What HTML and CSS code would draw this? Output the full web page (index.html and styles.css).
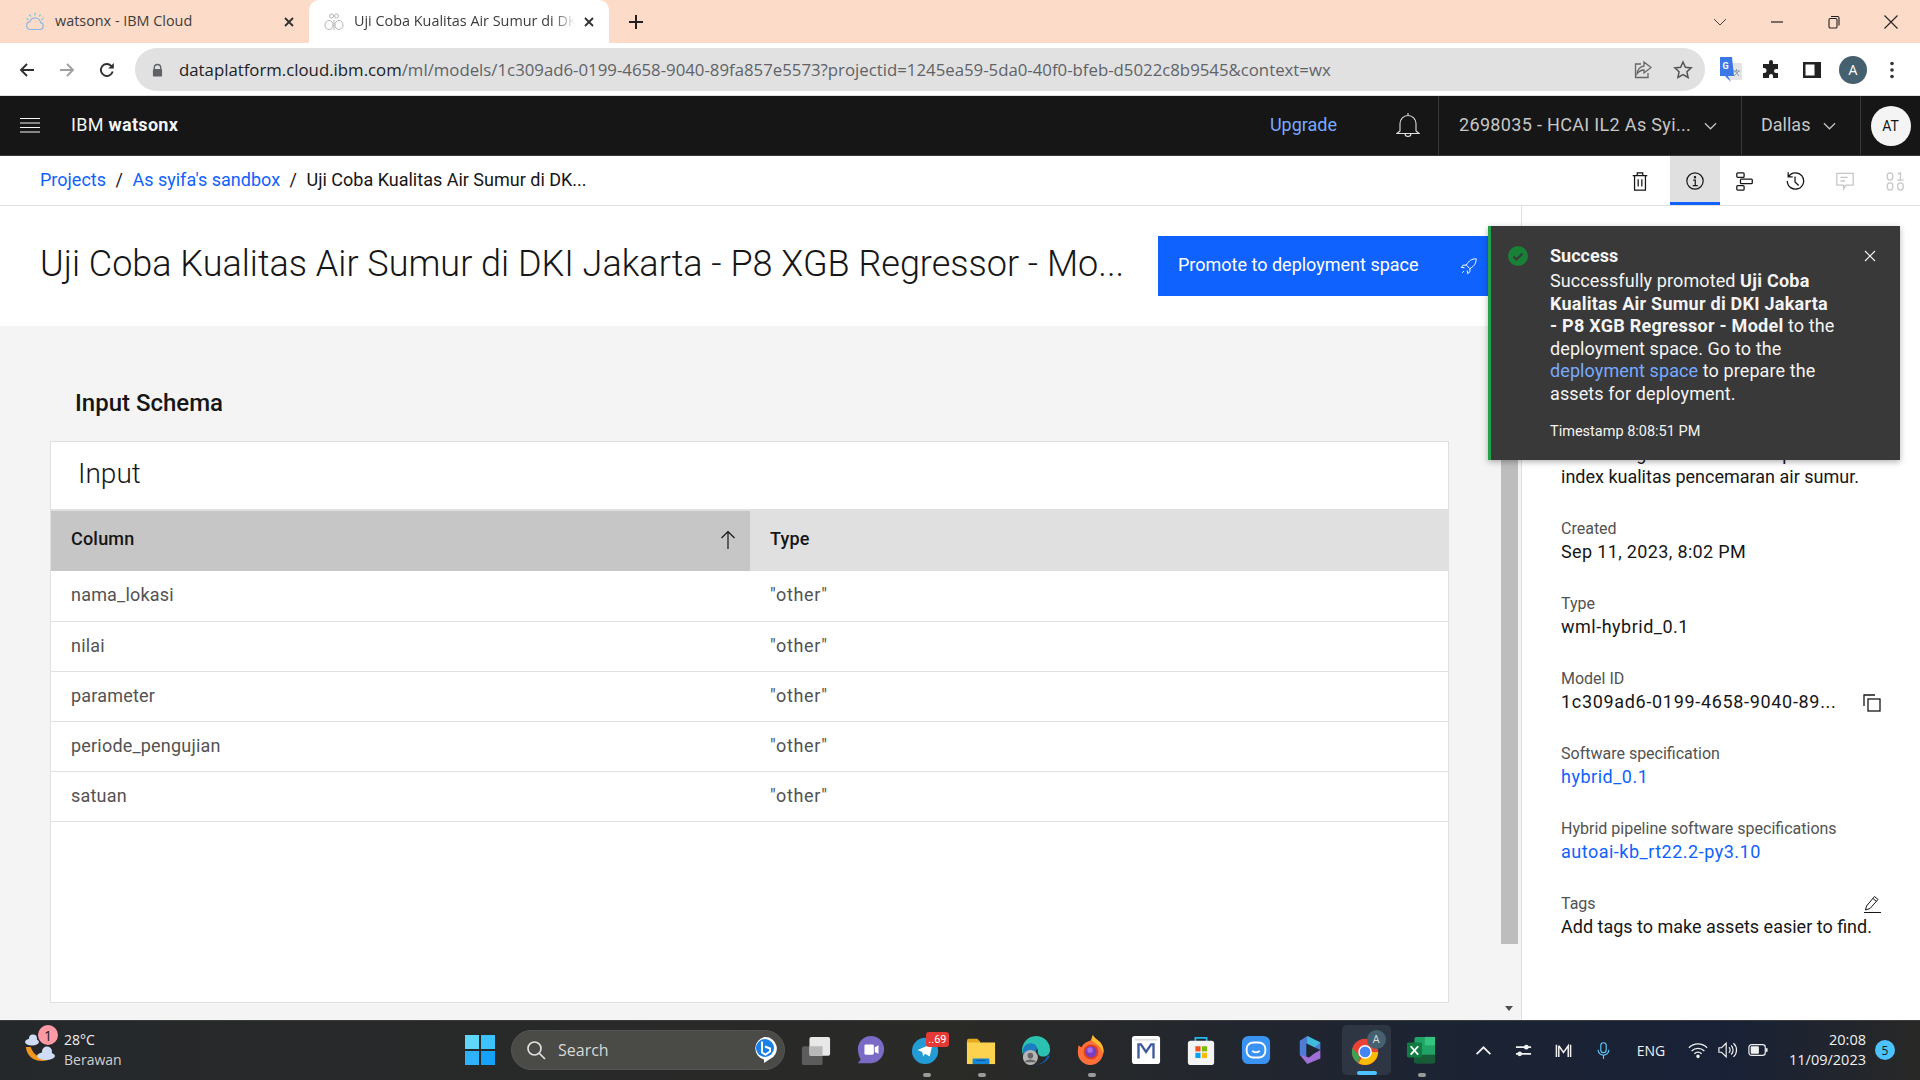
FILE: index.html
```html
<!DOCTYPE html>
<html lang="en">
<head>
<meta charset="utf-8">
<title>Uji Coba Kualitas Air Sumur di DKI Jakarta</title>
<link rel="stylesheet" href="styles.css">
</head>
<body>
<div class="screen">
  <div class="tabstrip">
    <div class="tab">
      <svg class="favicon" viewBox="0 0 20 20" fill="none"><path d="M5 17.500h10a3.500 3.500 0 0 0 .6-6.900A5.500 5.500 0 0 0 5 9.600a4 4 0 0 0 0 7.900z" stroke="#8fb6e8" stroke-width="1.200"/><path d="M10 1v2.500M4.500 2.500l1.200 2M15.500 2.500l-1.200 2M1.500 6.500l2 1M18.500 6.500l-2 1" stroke="#5cc8d8" stroke-width="1.200"/></svg>
      <span class="tab-title">watsonx - IBM Cloud</span>
      <svg class="tab-close" viewBox="0 0 12 12"><path d="M2 2l8 8M10 2l-8 8" stroke="#303030" stroke-width="1.800"/></svg>
    </div>
    <div class="tab tab-active">
      <svg class="favicon" viewBox="0 0 20 20" fill="none" stroke="#b4b4b4"><circle cx="7.500" cy="4" r="2"/><circle cx="12.500" cy="4" r="2"/><ellipse cx="5" cy="13" rx="4" ry="4.500"/><ellipse cx="15" cy="13" rx="4" ry="4.500"/><path d="M10 8v10"/></svg>
      <span class="tab-title tab-title-fade">Uji Coba Kualitas Air Sumur di DKI Jakarta</span>
      <svg class="tab-close" viewBox="0 0 12 12"><path d="M2 2l8 8M10 2l-8 8" stroke="#303030" stroke-width="1.800"/></svg>
    </div>
    <svg class="newtab" viewBox="0 0 16 16"><path d="M8 1v14M1 8h14" stroke="#202020" stroke-width="2"/></svg>
    <div class="winctl">
      <svg viewBox="0 0 16 16"><path d="M2 5l6 6 6-6" fill="none" stroke="#444" stroke-width="1"/></svg>
      <svg viewBox="0 0 16 16"><path d="M2 8h12" stroke="#222" stroke-width="1.200"/></svg>
      <svg viewBox="0 0 16 16"><path d="M5 2.500h6.500a1.500 1.500 0 0 1 1.500 1.500v7.500" fill="none" stroke="#222" stroke-width="1.100"/><rect x="3" y="4.500" width="8" height="9.500" rx="1.300" fill="none" stroke="#222" stroke-width="1.100"/></svg>
      <svg viewBox="0 0 16 16"><path d="M1.500 1.500l13 13M14.500 1.500l-13 13" stroke="#222" stroke-width="1.100"/></svg>
    </div>
  </div>

  <div class="toolbar">
    <div class="navbtns">
      <svg viewBox="0 0 18 18"><path d="M16 9H3M9 3L3 9l6 6" fill="none" stroke="#303030" stroke-width="1.900"/></svg>
      <svg viewBox="0 0 18 18"><path d="M2 9h13M9 3l6 6-6 6" fill="none" stroke="#a0a0a0" stroke-width="1.900"/></svg>
      <svg viewBox="0 0 18 18"><path d="M14.700 10.500A6 6 0 1 1 13.200 4.800L15 6.500" fill="none" stroke="#303030" stroke-width="1.900"/><path d="M15.800 2v5.600h-5.600z" fill="#303030"/></svg>
    </div>
    <div class="omnibox">
      <svg class="lock" viewBox="0 0 12 14"><path d="M2.500 6V4.500a3.500 3.500 0 0 1 7 0V6" fill="none" stroke="#5f6368" stroke-width="1.500"/><rect x="1" y="6" width="10" height="8" rx="1" fill="#5f6368"/></svg>
      <div class="url"><span class="url-host">dataplatform.cloud.ibm.com</span>/ml/models/1c309ad6-0199-4658-9040-89fa857e5573?projectid=1245ea59-5da0-40f0-bfeb-d5022c8b9545&amp;context=wx</div>
      <svg class="omni-icon" viewBox="0 0 20 20" fill="none" stroke="#666" stroke-width="1.300"><path d="M8 4H2.500v13.500H15V13"/><path d="M11 2l7 5.500-7 5.500V10c-3 0-5 1-7 4 0-4 3-7.500 7-8z"/></svg>
      <svg class="omni-icon" viewBox="0 0 20 20" fill="none" stroke="#555" stroke-width="1.500"><path d="M10 2l2.400 5.300 5.800.6-4.300 3.900 1.200 5.700L10 14.600l-5.100 2.900 1.200-5.700L1.800 7.900l5.800-.6z"/></svg>
    </div>
    <div class="extensions">
      <svg class="translate" viewBox="0 0 22 26"><rect x="9" y="6" width="13" height="17" fill="#e4e4e4"/><path d="M13 14h7M16.500 12v2M14 19l5-5M15 14l4 5" stroke="#8a9aa8" fill="none"/><path d="M0 0h12l2 19H8l3 6-6-6H0z" fill="#3b78e7"/><text class="gt" x="2.500" y="12">G</text></svg>
      <svg viewBox="0 0 20 20"><path d="M8 2a2 2 0 0 1 4 0v2h5v5h-2a2 2 0 0 0 0 4h2v5h-5v-2a2 2 0 0 0-4 0v2H2v-5h1a2.500 2.500 0 0 0 0-5H2V4h6z" fill="#222"/></svg>
      <svg viewBox="0 0 20 20"><rect x="1" y="2" width="18" height="16" fill="#222"/><rect x="3.500" y="4.500" width="9" height="11" fill="#fff"/></svg>
      <div class="profile">A</div>
      <svg viewBox="0 0 20 20"><circle cx="10" cy="3.500" r="1.800" fill="#333"/><circle cx="10" cy="10" r="1.800" fill="#333"/><circle cx="10" cy="16.500" r="1.800" fill="#333"/></svg>
    </div>
  </div>

  <header class="topnav">
    <svg class="hamburger" viewBox="0 0 20 16"><path d="M0 1.500h20M0 6h20M0 10.500h20M0 15h20" stroke="#f4f4f4" stroke-width="1.200"/></svg>
    <div class="brand">IBM <b>watsonx</b></div>
    <a class="upgrade">Upgrade</a>
    <svg class="bell" viewBox="0 0 24 26" fill="none" stroke="#e0e0e0" stroke-width="1.100"><path d="M12 1v3M4 19v-7.500a8 8 0 0 1 16 0V19l3 2.500H1zM9 21.500a3 3 0 0 0 6 0"/></svg>
    <div class="nav-cell nav-account"><span>2698035 - HCAI IL2 As Syi...</span><svg viewBox="0 0 14 8"><path d="M1 1l6 6 6-6" fill="none" stroke="#c6c6c6" stroke-width="1.300"/></svg></div>
    <div class="nav-cell nav-region"><span>Dallas</span><svg viewBox="0 0 14 8"><path d="M1 1l6 6 6-6" fill="none" stroke="#c6c6c6" stroke-width="1.300"/></svg></div>
    <div class="nav-cell nav-user"><div class="avatar">AT</div></div>
  </header>

  <div class="crumbbar">
    <nav class="crumbs">
      <a>Projects</a><span class="sep">/</span><a>As syifa's sandbox</a><span class="sep">/</span><span>Uji Coba Kualitas Air Sumur di DK...</span>
    </nav>
    <div class="actions">
      <div class="action action-trash"><svg viewBox="0 0 20 22" fill="none" stroke="#161616" stroke-width="1.400"><path d="M2 5h16M7 5V2h6v3M4 5v16h12V5M8 9v8M12 9v8"/></svg></div>
      <div class="action action-on"><svg viewBox="0 0 22 22" fill="none" stroke="#161616" stroke-width="1.300"><circle cx="11" cy="11" r="9"/><path d="M9 10h2.300v6M8.500 16h5.500"/><circle cx="11" cy="6.800" r=".7" fill="#161616"/></svg></div>
      <div class="action"><svg viewBox="0 0 22 22" fill="none" stroke="#161616" stroke-width="1.400"><rect x="2" y="2" width="8" height="5" rx="1"/><rect x="6" y="9" width="13" height="5" rx="1"/><rect x="2" y="16" width="8" height="5" rx="1"/></svg></div>
      <div class="action"><svg viewBox="0 0 22 22" fill="none" stroke="#161616" stroke-width="1.400"><path d="M4 6a9 9 0 1 1-1.500 5M3.500 1.500V6.500h5M11 6v6l4 4"/></svg></div>
      <div class="action"><svg viewBox="0 0 22 22" fill="none" stroke="#c6c6c6" stroke-width="1.400"><path d="M2 2.500h18v13h-8l-2.500 4v-4H2zM6 7h8M6 11h5"/></svg></div>
      <div class="action"><svg viewBox="0 0 22 22" fill="none" stroke="#c6c6c6" stroke-width="1.400"><rect x="2.500" y="2" width="6" height="8" rx="3"/><path d="M14 3.500l3-1.500v8M13.500 10h7"/><rect x="2.500" y="13" width="6" height="8" rx="3"/><rect x="14" y="13" width="6" height="8" rx="3"/></svg></div>
    </div>
  </div>

  <div class="main">
    <section class="workspace">
      <div class="pagehead">
        <h1 class="page-title">Uji Coba Kualitas Air Sumur di DKI Jakarta - P8 XGB Regressor - Mo...</h1>
        <button class="promote"><span>Promote to deployment space</span><svg viewBox="0 0 20 20" fill="none" stroke="#fff" stroke-width="1.100"><path d="M18 2c-5 0-8 2-11 7l4 4c5-3 7-6 7-11zM7 9H3.500L1.500 11.500 5 12M11 13v3.500L8.500 18.500 8 15M4.500 15.500L2.500 17.500"/></svg></button>
      </div>
      <div class="content">
        <div class="schema">
          <h2 class="schema-title">Input Schema</h2>
          <div class="card">
            <div class="card-title">Input</div>
            <table class="grid">
              <thead>
                <tr><th class="th-sorted"><div class="th-inner">Column<svg viewBox="0 0 16 20"><path d="M8 19V1.500M1.500 8L8 1.500 14.500 8" fill="none" stroke="#161616" stroke-width="1.200"/></svg></div></th><th>Type</th></tr>
              </thead>
              <tbody>
                <tr><td>nama_lokasi</td><td>"other"</td></tr>
                <tr><td>nilai</td><td>"other"</td></tr>
                <tr><td>parameter</td><td>"other"</td></tr>
                <tr><td>periode_pengujian</td><td>"other"</td></tr>
                <tr><td>satuan</td><td>"other"</td></tr>
              </tbody>
            </table>
          </div>
        </div>
        <div class="scrollbar"><div class="thumb"></div><div class="scroll-down"></div></div>
      </div>
    </section>
    <aside class="panel">
      <div class="field"><div class="value value-clip">Model Regresor untuk memprediksi index kualitas pencemaran air sumur.</div></div>
      <div class="field"><div class="label">Created</div><div class="value value-date">Sep 11, 2023, 8:02 PM</div></div>
      <div class="field"><div class="label">Type</div><div class="value value-num">wml-hybrid_0.1</div></div>
      <div class="field"><div class="label">Model ID</div><div class="value value-row"><span class="value-id">1c309ad6-0199-4658-9040-89...</span><svg viewBox="0 0 18 18" fill="none" stroke="#161616" stroke-width="1.300"><rect x="5" y="5" width="12" height="12"/><path d="M1 12V1h11"/></svg></div></div>
      <div class="field"><div class="label">Software specification</div><div class="value value-num"><a>hybrid_0.1</a></div></div>
      <div class="field"><div class="label">Hybrid pipeline software specifications</div><div class="value value-num"><a>autoai-kb_rt22.2-py3.10</a></div></div>
      <div class="field"><div class="label label-row"><span>Tags</span><svg viewBox="0 0 18 18" fill="none" stroke="#161616" stroke-width="1"><path d="M1 17.500h17M2.500 15l1-4L11.500 1.500l3.500 3L7 13.500zM10 3.500l3.500 3"/></svg></div><div class="value">Add tags to make assets easier to find.</div></div>
    </aside>
  </div>

  <footer class="taskbar">
    <div class="weather">
      <svg class="weather-icon" viewBox="0 0 36 36"><path d="M3 16c1 9 10 14 21 11-8 1-15-3-18-11z" fill="#f0961e" stroke="#f0961e" stroke-width="2"/><g fill="#cfdcf5"><ellipse cx="8" cy="10" rx="7" ry="3.500"/><circle cx="9" cy="6.500" r="4"/><ellipse cx="22" cy="24" rx="9" ry="4"/><circle cx="23" cy="19.500" r="5"/></g></svg>
      <div class="weather-badge">1</div>
      <div class="weather-text"><div>28°C</div><div class="weather-sub">Berawan</div></div>
    </div>
    <div class="tb-slot">
      <svg class="start" viewBox="0 0 30 30"><rect width="14" height="14" fill="#5fd7fb"/><rect x="16" width="14" height="14" fill="#3cc3fb"/><rect y="16" width="14" height="14" fill="#2eb2fa"/><rect x="16" y="16" width="14" height="14" fill="#17a2fa"/></svg>
    </div>
    <div class="search">
      <svg viewBox="0 0 20 20" fill="none" stroke="#e0e0e0" stroke-width="1.700"><circle cx="8.500" cy="8.500" r="6.500"/><path d="M13 13l6 6"/></svg>
      <span>Search</span>
      <div class="bing"><svg viewBox="0 0 24 28"><path d="M12 1a11.500 11.500 0 0 1 5 22l-6 4v-3.500A11.500 11.500 0 0 1 12 1z" fill="#fff"/><circle cx="12" cy="12" r="9" fill="#1b7fe8"/><path d="M9 5.500v11l3.500 2 4.500-3v-3l-5-2" fill="none" stroke="#fff" stroke-width="2"/></svg></div>
    </div>
    <div class="tb-apps">
      <div class="tb-slot"><svg viewBox="0 0 32 32"><rect x="1" y="12" width="22" height="20" rx="2" fill="#5c5c5c"/><rect x="9" y="2" width="22" height="20" rx="2" fill="#e8e8e8"/><rect x="9" y="12" width="14" height="10" fill="#b8b8b8"/></svg></div>
      <div class="tb-slot"><svg viewBox="0 0 32 32"><path d="M16 1c8 0 14 6 14 14s-6 15-14 15H2l3-4C3 23 2 19 2 15 2 7 8 1 16 1z" fill="#7b6ac6"/><rect x="9" y="10" width="10" height="11" rx="1.500" fill="#fff"/><path d="M20 13l4-2v9l-4-2z" fill="#fff"/></svg></div>
      <div class="tb-slot tb-open"><svg viewBox="0 0 32 32"><circle cx="15" cy="17" r="14" fill="#239bd4"/><path d="M7 16l16-7-3 14-5-3-2 3-1-5z" fill="#fff"/></svg><div class="tg-badge">..69</div></div>
      <div class="tb-slot tb-open"><svg viewBox="0 0 32 32"><path d="M1 6a2 2 0 0 1 2-2h9l3 3v3H1z" fill="#e5a91c"/><rect x="1" y="8" width="30" height="23" fill="#fcd24f"/><rect x="7" y="25" width="18" height="6" rx="1" fill="#1488d8"/><path d="M11 27h10" stroke="#0a4f90"/></svg></div>
      <div class="tb-slot"><svg viewBox="0 0 32 32"><path d="M16 1a15 15 0 0 1 15 15c0 4-3 7-7 7-6 0-6-4-6-6 0-5-5-6-8-5-4 1-7 5-8 9A15 15 0 0 1 16 1z" fill="#2bc1b0"/><path d="M2 18c0-7 6-10 10-9 3 .5 5 2 5 5l-5 17A15 15 0 0 1 2 18z" fill="#1b7dc4"/><path d="M31 22a15 15 0 0 1-17 9c6 1 12-3 14-9z" fill="#0f5da8"/><circle cx="10" cy="24" r="8" fill="#b5b5b5"/><circle cx="10" cy="22" r="3" fill="#666"/><path d="M4 29c1-4 11-4 12 0" fill="#666"/></svg></div>
      <div class="tb-slot tb-open"><svg viewBox="0 0 32 32"><path d="M3 11c1 1 2 2 3 2 1-3 5-6 9-7 2-2 2-4 3-6 1 3 5 5 8 8 3 4 4 8 3 12-1 7-7 12-14 12C8 32 2 26 2 19c0-3 0-6 1-8z" fill="#ff7139"/><path d="M18 0c1 3 5 5 8 8 3 4 4 8 3 12-1-5-5-10-10-12-3-2-2-5-1-8z" fill="#ffbd2e"/><circle cx="16" cy="18" r="8" fill="#e0401f"/><circle cx="16" cy="18" r="6" fill="#7a3fc0"/><circle cx="15" cy="16" r="3" fill="#a56fe8"/></svg></div>
      <div class="tb-slot"><svg viewBox="0 0 32 32"><rect x="1" y="1" width="30" height="30" rx="3" fill="#fff"/><path d="M8 25V10h2.500l5.500 8 5.500-8H24v15M8 10v15M24 10v15" fill="none" stroke="#3d5a9e" stroke-width="2.500"/><path d="M4 5h24" stroke="#ddd" stroke-width="2"/></svg></div>
      <div class="tb-slot"><svg viewBox="0 0 32 32"><path d="M10 8V3h12v5" fill="none" stroke="#28b8e8" stroke-width="1.800"/><rect x="2" y="6" width="28" height="26" rx="3" fill="#f4f4f4"/><rect x="10" y="12" width="5.500" height="5.500" fill="#f25022"/><rect x="17" y="12" width="5.500" height="5.500" fill="#7fba00"/><rect x="10" y="19" width="5.500" height="5.500" fill="#00a4ef"/><rect x="17" y="19" width="5.500" height="5.500" fill="#ffb900"/></svg></div>
      <div class="tb-slot"><svg viewBox="0 0 32 32"><rect x="1" y="1" width="30" height="30" rx="7" fill="#3a93f2"/><rect x="6" y="8" width="20" height="16" rx="7" fill="none" stroke="#fff" stroke-width="2"/><path d="M12 17c2 2 6 2 8 0" fill="none" stroke="#fff" stroke-width="1.800"/></svg></div>
      <div class="tb-slot"><svg viewBox="0 0 32 32"><path d="M12 1l14 7v8L11 9v16l-7-4V6z" fill="#4d7cd4"/><path d="M12 1l14 7-6 5-8-4z" fill="#3dbbd8"/><path d="M26 16v9l-14 6-8-10 10 3 5-4z" fill="#a06fd8"/></svg></div>
      <div class="tb-slot tb-active"><svg viewBox="0 0 32 32"><circle cx="15" cy="18" r="14" fill="#ea4335"/><path d="M15 18h14a14 14 0 0 1-21 12z" fill="#fbbc05"/><path d="M8 30a14 14 0 0 1-6.500-16L8.500 22z" fill="#34a853"/><circle cx="15" cy="18" r="6.500" fill="#4285f4" stroke="#fff" stroke-width="1.500"/></svg><div class="chrome-badge">A</div></div>
      <div class="tb-slot tb-open"><svg viewBox="0 0 32 32"><rect x="9" y="2" width="22" height="28" rx="2" fill="#21a366"/><rect x="20" y="2" width="11" height="9" fill="#33c481"/><rect x="9" y="21" width="22" height="9" fill="#185c37"/><rect x="1" y="8" width="16" height="16" rx="1.500" fill="#107c41"/><path d="M5 12l8 9M13 12l-8 9" stroke="#fff" stroke-width="2"/></svg></div>
    </div>
    <div class="tray">
      <div class="tray-item tray-w40"><svg viewBox="0 0 16 10"><path d="M1.500 8.500L8 2l6.500 6.500" fill="none" stroke="#f0f0f0" stroke-width="1.700"/></svg></div>
      <div class="tray-item tray-w40"><svg viewBox="0 0 18 16"><path d="M1 4.500h16M1 11.500h16" stroke="#f0f0f0" stroke-width="1.800"/><circle cx="12" cy="4.500" r="2.500" fill="#f0f0f0"/><circle cx="5" cy="11.500" r="2.500" fill="#f0f0f0"/></svg></div>
      <div class="tray-item tray-w40"><svg viewBox="0 0 18 16"><path d="M1.500 2v13M16.500 2v13M4 3l5 7 5-7v12M4 3v12" fill="none" stroke="#f0f0f0" stroke-width="1.600"/></svg></div>
      <div class="tray-item tray-w40"><svg viewBox="0 0 18 22" fill="none" stroke="#60cdff" stroke-width="1.400"><rect x="5.500" y="1" width="7" height="13" rx="3.500"/><path d="M2 10a7 7 0 0 0 14 0M9 17v5"/></svg></div>
      <div class="tray-item tray-eng">ENG</div>
      <div class="tray-item tray-w30 tray-first"><svg viewBox="0 0 22 18" fill="none" stroke="#f0f0f0" stroke-width="1.500"><path d="M1 6.500a14 14 0 0 1 20 0M4 10a10 10 0 0 1 14 0M7 13a6 6 0 0 1 8 0"/><circle cx="11" cy="16" r="1.200" fill="#f0f0f0"/></svg></div>
      <div class="tray-item tray-w30"><svg viewBox="0 0 22 18" fill="none" stroke="#f0f0f0" stroke-width="1.300"><path d="M1 6.500v5h3l5 5V1.500l-5 5zM12 6a4 4 0 0 1 0 6M14.500 4a7 7 0 0 1 0 10M17 1.500a10 10 0 0 1 0 15"/></svg></div>
      <div class="tray-item tray-w30"><svg viewBox="0 0 22 14" fill="none" stroke="#f0f0f0" stroke-width="1.300"><rect x="1" y="1" width="18" height="12" rx="3"/><rect x="3" y="3" width="9" height="8" rx="1" fill="#f0f0f0" stroke="none"/><path d="M20.500 5v4" stroke-width="2"/></svg></div>
      <div class="clock"><div>20:08</div><div>11/09/2023</div></div>
      <div class="notif">5</div>
    </div>
  </footer>

  <div class="toast">
    <svg class="toast-icon" viewBox="0 0 20 20"><circle cx="10" cy="10" r="10" fill="#198038"/><path d="M5.500 10.500l3 3 6-6" fill="none" stroke="#393939" stroke-width="2"/></svg>
    <div class="toast-body">
      <div class="toast-title">Success</div>
      <div class="toast-text">Successfully promoted <b>Uji Coba</b><br><b>Kualitas Air Sumur di DKI Jakarta</b><br><b>- P8 XGB Regressor - Model</b> to the<br>deployment space. Go to the<br><a>deployment space</a> to prepare the<br>assets for deployment.</div>
      <div class="toast-time">Timestamp 8:08:51 PM</div>
    </div>
    <svg class="toast-close" viewBox="0 0 12 12"><path d="M1 1l10 10M11 1L1 11" stroke="#f4f4f4" stroke-width="1.100"/></svg>
  </div>
</div>
</body>
</html>
```
FILE: styles.css
```css
* { box-sizing: border-box; }
html, body { margin: 0; padding: 0; }
body { font-family: Roboto, "Noto Sans", sans-serif; color: #161616; background: #fff; }
svg { display: block; flex: none; }
a { color: #0f62fe; text-decoration: none; }
.screen { position: relative; width: 1920px; height: 1080px; overflow: hidden; display: flex; flex-direction: column; }

/* browser chrome */
.tabstrip { height: 43px; background: #fcdcc8; display: flex; align-items: center; flex: none; font-family: "Open Sans", sans-serif; font-size: 14.400px; color: #3c3c3c; }
.tab { width: 309px; height: 43px; display: flex; align-items: center; padding: 0 14px 0 25px; }
.tab-active { width: 300px; background: #fff; border-radius: 10px 10px 0 0; padding: 0 14px 0 15px; }
.favicon { width: 20px; height: 20px; }
.tab-title { margin-left: 10px; flex: 1; white-space: nowrap; overflow: hidden; padding-bottom: 2px; }
.tab-title-fade { -webkit-mask-image: linear-gradient(to right, #000 90%, transparent); mask-image: linear-gradient(to right, #000 90%, transparent); }
.tab-close { width: 12px; height: 12px; margin-left: 8px; }
.newtab { width: 16px; height: 16px; margin-left: 19px; }
.winctl { margin-left: auto; display: flex; align-items: center; padding-right: 21px; gap: 41px; }
.winctl svg { width: 16px; height: 16px; }

.toolbar { height: 53px; flex: none; background: #fff; display: flex; align-items: center; border-bottom: 1px solid #e0e0e0; padding-top: 1px; }
.navbtns { display: flex; width: 135px; flex: none; padding-left: 18px; gap: 22px; }
.navbtns svg { width: 18px; height: 18px; }
.omnibox { width: 1570px; flex: none; height: 43px; background: #e1e1e1; border-radius: 22px; display: flex; align-items: center; padding-left: 17px; }
.lock { width: 11px; height: 14px; }
.url { margin-left: 16px; width: 1454px; flex: none; font-family: "Open Sans", sans-serif; font-size: 16.800px; color: #5f6368; white-space: nowrap; overflow: hidden; }
.url-host { color: #202124; }
.omni-icon { width: 20px; height: 20px; margin-right: 20px; }
.extensions { display: flex; align-items: center; margin-left: 15px; flex: none; }
.extensions svg { width: 20px; height: 20px; margin-right: 21px; }
.extensions svg:last-child { margin-right: 0; }
.extensions .translate { width: 22px; height: 26px; margin-right: 19px; }
.gt { font: bold 9px Roboto, sans-serif; fill: #fff; }
.profile { width: 28px; height: 28px; border-radius: 50%; background: #45606f; color: #fff; font: 14px "Open Sans", sans-serif; display: flex; align-items: center; justify-content: center; margin-right: 15px; margin-left: -4px; }

/* top nav */
.topnav { height: 60px; flex: none; background: #161616; border-bottom: 1px solid #393939; display: flex; align-items: center; color: #f4f4f4; font-size: 18px; }
.hamburger { width: 20px; height: 16px; margin-left: 20px; margin-bottom: 2px; }
.brand { margin-left: 31px; padding-bottom: 2px; letter-spacing: .300px; }
.brand b { font-weight: 700; }
.upgrade { margin-left: auto; color: #78a9ff; padding-bottom: 2px; }
.bell { width: 24px; height: 26px; margin-left: 59px; margin-right: 18px; margin-bottom: 2px; }
.nav-cell { height: 59px; display: flex; align-items: center; border-left: 1px solid #393939; color: #c6c6c6; }
.nav-cell span { padding-bottom: 2px; }
.nav-cell svg { width: 13px; height: 8px; }
.nav-account { width: 303px; padding-left: 20px; justify-content: space-between; padding-right: 24px; letter-spacing: .330px; }
.nav-region { width: 119px; padding-left: 19px; justify-content: space-between; padding-right: 24px; }
.nav-user { width: 60px; justify-content: center; }
.avatar { width: 40px; height: 40px; border-radius: 50%; background: #f4f4f4; color: #161616; font-size: 14px; display: flex; align-items: center; justify-content: center; }

/* breadcrumb */
.crumbbar { height: 50px; flex: none; border-bottom: 1px solid #e0e0e0; display: flex; justify-content: space-between; align-items: stretch; padding-left: 40px; background: #fff; }
.crumbs { display: flex; align-items: center; font-size: 18px; padding-bottom: 2px; }
.sep { margin: 0 9.500px; }
.actions { display: flex; }
.action { width: 50px; display: flex; align-items: center; justify-content: center; }
.action svg { width: 20px; height: 20px; }
.action-trash { margin-right: 5px; }
.action-on { background: #e0e0e0; border-bottom: 3px solid #0f62fe; padding-top: 3px; }

/* main */
.main { flex: 1; display: flex; min-height: 0; }
.workspace { width: 1521px; flex: none; display: flex; flex-direction: column; }
.pagehead { height: 120px; flex: none; display: flex; align-items: center; padding-left: 40px; background: #fff; }
.page-title { margin: 0 0 4px; width: 1118px; font-size: 36px; font-weight: 300; white-space: nowrap; overflow: hidden; }
.promote { width: 333px; height: 60px; border: 0; background: #0f62fe; color: #fff; font: 18px Roboto, sans-serif; display: flex; align-items: center; padding: 0 0 2px 20px; text-align: left; margin-top: -1px; }
.promote svg { width: 18px; height: 18px; margin-left: 41px; margin-top: 2px; }
.content { flex: 1; display: flex; background: #f4f4f4; min-height: 0; padding-right: 3px; }
.schema { flex: 1; padding: 62px 52px 17px 50px; display: flex; flex-direction: column; }
.schema-title { margin: 0 0 23px 25px; font-size: 24px; line-height: 30px; font-weight: 500; }
.card { flex: 1; background: #fff; border: 1px solid #e0e0e0; }
.card-title { height: 67px; display: flex; align-items: center; padding: 0 0 5px 27px; font-size: 28px; font-weight: 300; }
.grid { width: 100%; border-collapse: collapse; table-layout: fixed; font-size: 18px; letter-spacing: .200px; }
.grid th { height: 61px; background: #e0e0e0; text-align: left; padding: 0 20px 6px; font-weight: 500; font-size: 18px; border-top: 2px solid #e0e0e0; }
.grid th:first-child { width: 699px; }
.grid .th-sorted { background: #c6c6c6; padding-right: 14px; }
.th-inner { display: flex; justify-content: space-between; align-items: center; }
.th-inner svg { width: 16px; height: 20px; margin-top: 4px; }
.grid td { height: 50px; padding: 0 20px 2px; color: #525252; border-bottom: 1px solid #e0e0e0; }
.grid td + td { letter-spacing: .700px; }
.scrollbar { width: 17px; flex: none; position: relative; }
.thumb { height: 618px; background: #bdbdbd; }
.scroll-down { position: absolute; left: 4px; bottom: 9px; border: 4.500px solid transparent; border-top: 5px solid #505050; border-bottom: 0; }

/* details panel */
.panel { flex: 1; border-left: 1px solid #e0e0e0; background: #fff; padding: 237px 42px 0 39px; }
.field { margin-bottom: 30px; }
.label { font-size: 16px; line-height: 22px; color: #525252; }
.label-row { display: flex; justify-content: space-between; align-items: center; }
.label-row svg { width: 18px; height: 18px; }
.value { font-size: 18px; line-height: 23px; }
.value-clip { line-height: 22.500px; width: 320px; }
.value-date { letter-spacing: .350px; }
.value-num { letter-spacing: .500px; }
.value-id { letter-spacing: .680px; }
.value-row { display: flex; justify-content: space-between; align-items: center; }
.value-row svg { width: 18px; height: 18px; margin-top: 3px; }

/* taskbar */
.taskbar { height: 60px; flex: none; display: flex; align-items: center; border-top: 1px solid #3c3c3c; padding-bottom: 1px; background: linear-gradient(to right, #25282b 0%, #2a2a27 50%, #1c2333 75%, #182136 90%, #282826 100%); color: #f0f0f0; }
.weather { width: 452px; flex: none; position: relative; display: flex; align-items: center; padding-left: 24px; }
.weather-icon { width: 36px; height: 36px; }
.weather-badge { position: absolute; left: 38px; top: -5px; width: 20px; height: 20px; border-radius: 50%; background: #ff99a4; color: #1a1a1a; font: 14px "Open Sans", sans-serif; display: flex; align-items: center; justify-content: center; }
.weather-text { margin-left: 4px; font: 14px/20px "Open Sans", sans-serif; }
.weather-sub { color: #d0d0d0; }
.tb-slot { width: 55px; height: 50px; flex: none; display: flex; align-items: center; justify-content: center; position: relative; }
.tb-slot svg { width: 30px; height: 30px; }
.search { width: 274px; height: 40px; margin-left: 4px; border-radius: 20px; background: #4a4a46; border: 1px solid #555; display: flex; align-items: center; padding-left: 14px; font: 16px "Open Sans", sans-serif; color: #d8d8d8; flex: none; }
.search svg { width: 20px; height: 20px; }
.search span { margin-left: 12px; }
.bing { margin-left: auto; margin-right: 7px; }
.bing svg { width: 24px; height: 28px; }
.tb-apps { display: flex; margin-left: 3.500px; }
.tb-open::after { content: ""; position: absolute; left: 24px; bottom: -2px; width: 8px; height: 4px; border-radius: 2px; background: #9a9a9a; }
.tb-active { background: #2e3644; border-radius: 5px; width: 49px; margin: 0 3px; }
.tb-active::after { content: ""; position: absolute; left: 15px; bottom: 0; width: 20px; height: 4px; border-radius: 2px; background: #4cc2ff; }
.tg-badge { position: absolute; right: 5px; top: 7px; background: #e53935; color: #fff; border-radius: 3px; font: 11px Roboto, sans-serif; padding: 1px 2px; }
.chrome-badge { position: absolute; right: 5px; top: 5px; width: 19px; height: 19px; border-radius: 50%; background: #45606f; color: #ddd; font: 11px Roboto, sans-serif; display: flex; align-items: center; justify-content: center; }
.tray { display: flex; align-items: center; margin-left: 14.500px; flex: 1; font: 14px "Open Sans", sans-serif; }
.tray-item { display: flex; align-items: center; justify-content: center; height: 40px; flex: none; }
.tray-w40 { width: 40px; }
.tray-w30 { width: 30px; }
.tray-first { margin-left: 4px; }
.tray-w40 svg { width: 17px; height: 17px; }
.tray-w30 svg { width: 20px; height: 18px; }
.tray-eng { width: 56px; }
.clock { width: 93px; text-align: right; line-height: 20px; font-size: 14.500px; white-space: nowrap; }
.notif { width: 20px; height: 20px; border-radius: 50%; background: #4cc2ff; color: #1a1a1a; font-size: 12px; display: flex; align-items: center; justify-content: center; margin-left: 9px; }

/* toast */
.toast { position: absolute; left: 1488px; top: 226px; width: 412px; height: 234px; background: #393939; border-left: 3px solid #24a148; color: #f4f4f4; display: flex; padding: 20px 0 0 17px; box-shadow: 0 2px 6px rgba(0,0,0,.3); }
.toast-icon { width: 20px; height: 20px; }
.toast-body { margin-left: 22px; width: 330px; font-size: 18px; }
.toast-title { font-weight: 700; line-height: 20px; }
.toast-text { line-height: 22.500px; margin-top: 4.250px; letter-spacing: .100px; }
.toast-text b { letter-spacing: .250px; }
.toast-text a { color: #78a9ff; }
.toast-time { font-size: 14.500px; line-height: 20px; margin-top: 16.500px; }
.toast-close { width: 12px; height: 12px; position: absolute; right: 24px; top: 24px; }
```
